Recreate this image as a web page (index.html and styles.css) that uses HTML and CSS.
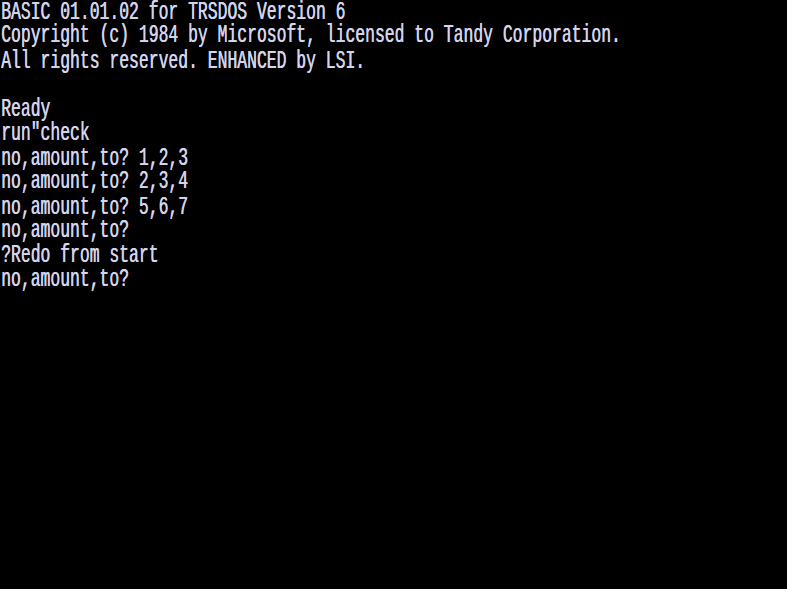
FILE: index.html
```html
<!DOCTYPE html>
<html>
<head>
<meta charset="utf-8">
<link rel="stylesheet" href="styles.css">
</head>
<body>
<pre class="screen">BASIC 01.01.02 for TRSDOS Version 6
Copyright (c) 1984 by Microsoft, licensed to Tandy Corporation.
All rights reserved. ENHANCED by LSI.

Ready
run"check
no,amount,to? 1,2,3
no,amount,to? 2,3,4
no,amount,to? 5,6,7
no,amount,to?
?Redo from start
no,amount,to?</pre>
</body>
</html>
```
FILE: styles.css
```css
html, body {
  margin: 0;
  padding: 0;
  background: #000;
  width: 787px;
  height: 589px;
  overflow: hidden;
}
.screen {
  margin: 0;
  padding: 0 0 0 1px;
  font-family: "Liberation Mono", monospace;
  font-size: 16.4px;
  line-height: 15.46px;
  color: #d4d4ec;
  text-shadow: 0.4px 0 0 #d4d4ec;
  transform: scaleY(1.57);
  transform-origin: 0 0;
  white-space: pre;
}
```
